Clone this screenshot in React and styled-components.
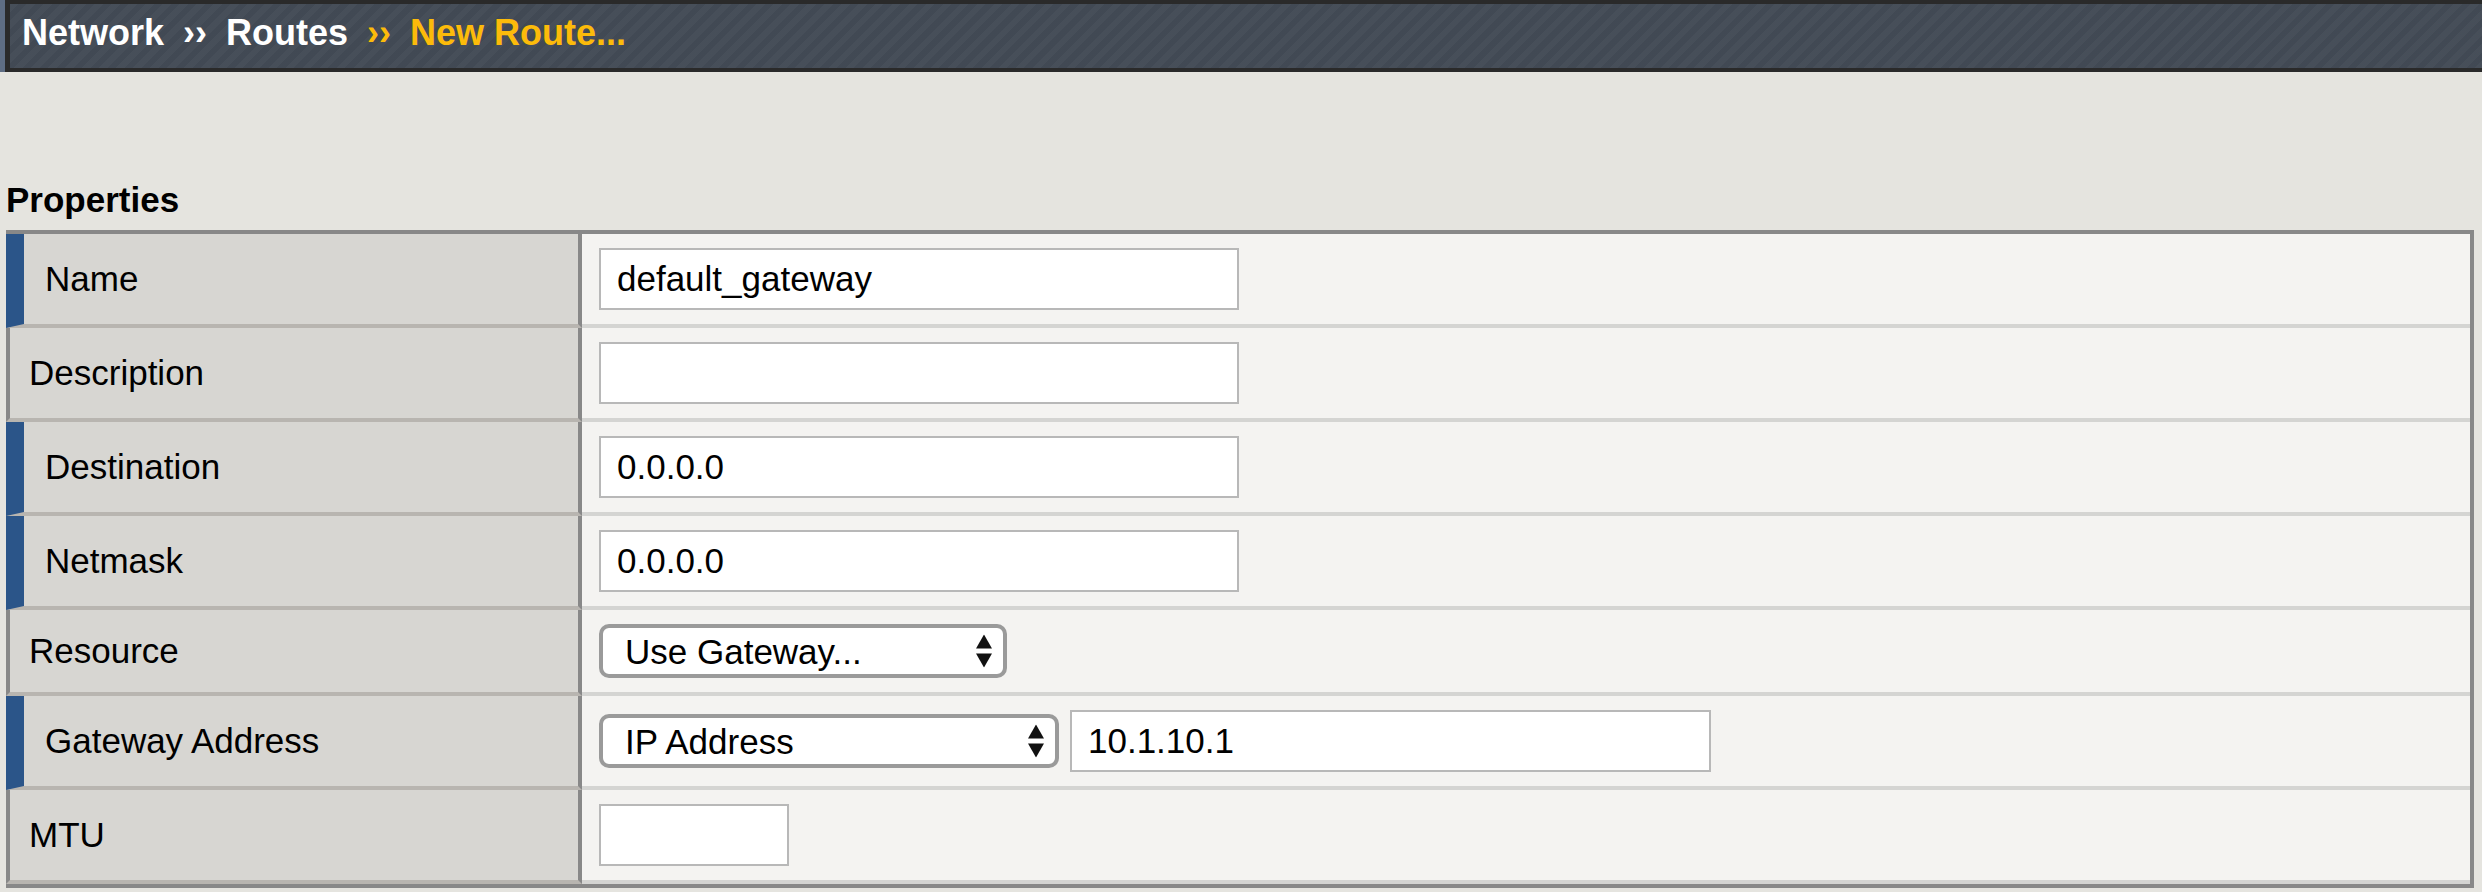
import React from "react";
import styled, { createGlobalStyle } from "styled-components";

const GlobalStyle = createGlobalStyle`
  html, body { margin: 0; padding: 0; background: #e5e4df; }
  body { font-family: "Liberation Sans", Arial, sans-serif; color: #000; }
  *, *::before, *::after { box-sizing: border-box; }
`;

const HeaderFrame = styled.header`
  border-left: 5px solid #5e6d83;
`;

const Breadcrumbs = styled.nav`
  display: flex;
  align-items: center;
  gap: 19px;
  height: 72px;
  padding: 0 0 7px 12px;
  border-top: 4px solid #2a2a2a;
  border-bottom: 4px solid #2a2a2a;
  border-left: 5px solid #2a2a2a;
  background-color: #434b56;
  background-image: repeating-linear-gradient(
    135deg,
    rgba(255, 255, 255, 0.018) 0 6px,
    rgba(0, 0, 0, 0.025) 6px 12px
  );
  font-size: 36px;
  font-weight: 700;
`;

const Crumb = styled.span`
  color: ${(p) => (p.$active ? "#fcbb0a" : "#ffffff")};
  white-space: nowrap;
`;

const Main = styled.main`
  padding: 0 8px 0 6px;
`;

const SectionTitle = styled.h2`
  margin: 108px 0 10px 0;
  font-size: 35px;
  font-weight: 700;
  line-height: 40px;
`;

const Table = styled.div`
  border-top: 4px solid #888888;
  border-right: 4px solid #888888;
  border-bottom: 4px solid #888888;
`;

const Row = styled.div`
  display: flex;
`;

const Label = styled.div`
  flex: 0 0 576px;
  display: flex;
  align-items: center;
  padding-left: ${(p) => (p.$required ? 21 : 19)}px;
  background: #d7d6d2;
  border-left: ${(p) => (p.$required ? "18px solid #2b5589" : "4px solid #888888")};
  border-right: 4px solid #888888;
  border-bottom: 4px solid #b8b5b0;
  font-size: 35px;
  white-space: nowrap;
`;

const Value = styled.div`
  flex: 1;
  display: flex;
  align-items: center;
  gap: 11px;
  padding: 14px 17px;
  background: #f4f3f1;
  border-bottom: 4px solid #d4d4d2;
`;

const TextInput = styled.input`
  width: ${(p) => p.$width || 640}px;
  height: 62px;
  margin: 0;
  padding: 0 16px;
  border: 2px solid #b8b8b8;
  border-radius: 0;
  background: #ffffff;
  font-family: "Liberation Sans", Arial, sans-serif;
  font-size: 35px;
  color: #000;
  outline: none;
`;

const SelectWrap = styled.div`
  position: relative;
  width: ${(p) => p.$width}px;
  height: 54px;
`;

const Select = styled.select`
  appearance: none;
  -webkit-appearance: none;
  width: 100%;
  height: 100%;
  margin: 0;
  padding: 0 44px 0 22px;
  border: 4px solid #9a9a9a;
  border-radius: 10px;
  background: #ffffff;
  font-family: "Liberation Sans", Arial, sans-serif;
  font-size: 35px;
  color: #000;
  outline: none;
`;

const Arrows = styled.svg`
  position: absolute;
  right: 15px;
  top: 50%;
  transform: translateY(-50%);
  pointer-events: none;
`;

function SelectBox({ width, value }) {
  return (
    <SelectWrap $width={width}>
      <Select defaultValue={value}>
        <option value={value}>{value}</option>
      </Select>
      <Arrows width="16" height="33" viewBox="0 0 16 33" aria-hidden="true">
        <polygon points="0,14 8,0 16,14" fill="#111" />
        <polygon points="0,19 16,19 8,33" fill="#111" />
      </Arrows>
    </SelectWrap>
  );
}

export default function App() {
  return (
    <>
      <GlobalStyle />
      <HeaderFrame>
        <Breadcrumbs>
          <Crumb>Network</Crumb>
          <Crumb>››</Crumb>
          <Crumb>Routes</Crumb>
          <Crumb $active>››</Crumb>
          <Crumb $active>New Route...</Crumb>
        </Breadcrumbs>
      </HeaderFrame>
      <Main>
        <SectionTitle>Properties</SectionTitle>
        <Table>
          <Row>
            <Label $required>Name</Label>
            <Value>
              <TextInput defaultValue="default_gateway" />
            </Value>
          </Row>
          <Row>
            <Label>Description</Label>
            <Value>
              <TextInput defaultValue="" />
            </Value>
          </Row>
          <Row>
            <Label $required>Destination</Label>
            <Value>
              <TextInput defaultValue="0.0.0.0" />
            </Value>
          </Row>
          <Row>
            <Label $required>Netmask</Label>
            <Value>
              <TextInput defaultValue="0.0.0.0" />
            </Value>
          </Row>
          <Row>
            <Label>Resource</Label>
            <Value>
              <SelectBox width={408} value="Use Gateway..." />
            </Value>
          </Row>
          <Row>
            <Label $required>Gateway Address</Label>
            <Value>
              <SelectBox width={460} value="IP Address" />
              <TextInput defaultValue="10.1.10.1" $width={641} />
            </Value>
          </Row>
          <Row>
            <Label>MTU</Label>
            <Value>
              <TextInput defaultValue="" $width={190} />
            </Value>
          </Row>
        </Table>
      </Main>
    </>
  );
}
